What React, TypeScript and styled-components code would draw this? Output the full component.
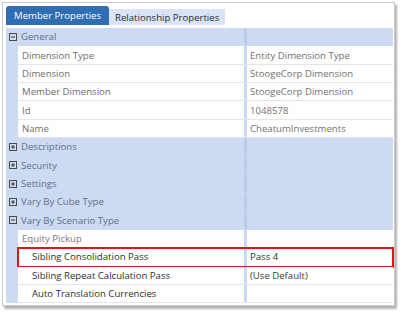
import React from 'react';
import styled, { createGlobalStyle } from 'styled-components';

const GlobalStyle = createGlobalStyle`
  html, body {
    margin: 0;
    padding: 0;
    background: #ffffff;
  }
  body {
    font-family: 'Open Sans', 'Noto Sans', sans-serif;
  }
`;

const Page = styled.div`
  width: 401px;
  height: 312px;
  padding: 2px 0 0 2px;
  box-sizing: border-box;
`;

const Panel = styled.div`
  width: 393px;
  height: 304px;
  box-sizing: border-box;
  border: 1px solid #c9c9c9;
  background: #ffffff;
  box-shadow: 2px 3px 2px rgba(0, 0, 0, 0.3);
  padding: 3px 0 0 3px;
  overflow: hidden;
  display: flex;
  flex-direction: column;
`;

const TabBar = styled.div`
  display: flex;
  align-items: flex-end;
  height: 19px;
  margin-bottom: 3px;
`;

const Tab = styled.div<{ $active?: boolean }>`
  height: ${(p) => (p.$active ? '19px' : '16px')};
  padding: 0 ${(p) => (p.$active ? '8px' : '6px')};
  display: flex;
  align-items: center;
  font-size: 9.6px;
  border-radius: ${(p) => (p.$active ? '3px 3px 0 0' : '0')};
  background: ${(p) => (p.$active ? '#2f6db4' : '#d9e5f5')};
  color: ${(p) => (p.$active ? '#ffffff' : '#2b2b2b')};
`;

const Grid = styled.div`
  width: 387px;
  display: flex;
  flex-direction: column;
`;

const Row = styled.div<{ $header?: boolean }>`
  display: flex;
  height: 18.36px;
  flex: none;
  background: ${(p) => (p.$header ? '#cddbf2' : '#ffffff')};
`;

const Indent = styled.div`
  width: 12px;
  flex: none;
  background: #cddbf2;
`;

const Body = styled.div<{ $header?: boolean; $highlight?: boolean }>`
  flex: 1;
  display: grid;
  grid-template-columns: ${(p) => (p.$header ? '238px' : '226px')} 3px 1fr;
  box-sizing: border-box;
  border-bottom: 1px solid ${(p) => (p.$header ? 'transparent' : '#dfe6f0')};
  outline: ${(p) => (p.$highlight ? '2px solid #e2141b' : 'none')};
  outline-offset: -1px;
  font-size: 9.6px;
`;

const NameCell = styled.div<{ $header?: boolean; $level?: number; $tone?: string }>`
  display: flex;
  align-items: center;
  gap: 4px;
  padding-left: ${(p) => (p.$header ? '3px' : `${4 + (p.$level || 0) * 10}px`)};
  color: ${(p) => p.$tone || '#6e6e6e'};
  white-space: nowrap;
`;

const Separator = styled.div<{ $header?: boolean }>`
  background: ${(p) => (p.$header ? '#bccdea' : '#cad9ef')};
`;

const ValueCell = styled.div<{ $tone?: string }>`
  display: flex;
  align-items: center;
  padding-left: 3px;
  color: ${(p) => p.$tone || '#727272'};
  white-space: nowrap;
`;

const Toggle = ({ open }: { open: boolean }) => (
  <svg width="8" height="8" viewBox="0 0 8 8">
    <rect x="0.5" y="0.5" width="7" height="7" fill="none" stroke="#4a4a4a" strokeWidth="1" />
    <line x1="2" y1="4" x2="6" y2="4" stroke="#3a3a3a" strokeWidth="1" />
    {!open && <line x1="4" y1="2" x2="4" y2="6" stroke="#3a3a3a" strokeWidth="1" />}
  </svg>
);

type Item =
  | { kind: 'group'; label: string; open: boolean }
  | { kind: 'prop'; label: string; value?: string; level?: number; tone?: string; valueTone?: string; highlight?: boolean };

const items: Item[] = [
  { kind: 'group', label: 'General', open: true },
  { kind: 'prop', label: 'Dimension Type', value: 'Entity Dimension Type' },
  { kind: 'prop', label: 'Dimension', value: 'StoogeCorp Dimension' },
  { kind: 'prop', label: 'Member Dimension', value: 'StoogeCorp Dimension' },
  { kind: 'prop', label: 'Id', value: '1048578' },
  { kind: 'prop', label: 'Name', value: 'CheatumInvestments' },
  { kind: 'group', label: 'Descriptions', open: false },
  { kind: 'group', label: 'Security', open: false },
  { kind: 'group', label: 'Settings', open: false },
  { kind: 'group', label: 'Vary By Cube Type', open: false },
  { kind: 'group', label: 'Vary By Scenario Type', open: true },
  { kind: 'prop', label: 'Equity Pickup', tone: '#7a7a7a' },
  { kind: 'prop', label: 'Sibling Consolidation Pass', value: 'Pass 4', level: 1, tone: '#2e2e2e', valueTone: '#2e2e2e', highlight: true },
  { kind: 'prop', label: 'Sibling Repeat Calculation Pass', value: '(Use Default)', level: 1, tone: '#2e2e2e', valueTone: '#3a3a3a' },
  { kind: 'prop', label: 'Auto Translation Currencies', level: 1, tone: '#2e2e2e' },
];

export default function App() {
  return (
    <Page>
      <GlobalStyle />
      <Panel>
        <TabBar>
          <Tab $active>Member Properties</Tab>
          <Tab>Relationship Properties</Tab>
        </TabBar>
        <Grid>
          {items.map((item) =>
            item.kind === 'group' ? (
              <Row key={item.label} $header>
                <Body $header>
                  <NameCell $header $tone="#5f6f88">
                    <Toggle open={item.open} />
                    {item.label}
                  </NameCell>
                  <Separator $header />
                  <ValueCell />
                </Body>
              </Row>
            ) : (
              <Row key={item.label}>
                <Indent />
                <Body $highlight={item.highlight}>
                  <NameCell $level={item.level} $tone={item.tone}>
                    {item.label}
                  </NameCell>
                  <Separator />
                  <ValueCell $tone={item.valueTone}>{item.value}</ValueCell>
                </Body>
              </Row>
            )
          )}
        </Grid>
      </Panel>
    </Page>
  );
}
